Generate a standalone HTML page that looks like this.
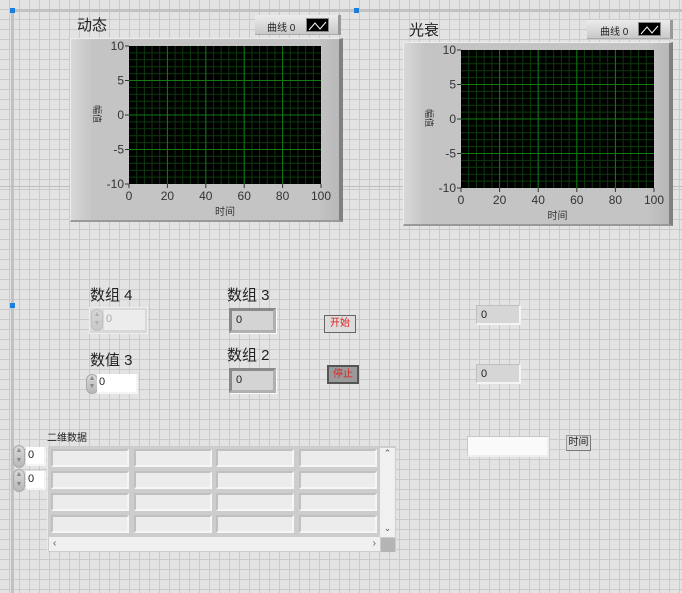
<!DOCTYPE html>
<html><head><meta charset="utf-8">
<style>
*{margin:0;padding:0;box-sizing:border-box}
body{width:682px;height:593px;overflow:hidden;position:relative;font-family:"Liberation Sans","Noto Sans CJK SC",sans-serif;color:#222;
background-color:#e3e3e3;
background-image:linear-gradient(to right,#cacaca 1px,transparent 1px),linear-gradient(to bottom,#cacaca 1px,transparent 1px);
background-size:10px 10px;background-position:9px 9px;}
.a{position:absolute}
.lbl{position:absolute;font-size:15px;line-height:17px;color:#222;white-space:nowrap}
.ind{position:absolute;background:#d4d4d4;border:3px solid;border-color:#8a8a8a #b0b0b0 #b0b0b0 #8a8a8a;box-shadow:1px 1px 0 #fafafa;font-size:11px;padding:3px 0 0 4px}
.btn{position:absolute;font-size:10px;color:#e02020;text-align:center;line-height:15px;border:1px solid #555}
.spin{position:absolute;width:12px;background:linear-gradient(#d8d8d8,#b8b8b8);border-radius:6px;border:1px solid #aaa;font-size:7px;color:#888;text-align:center;line-height:9px}
.num{position:absolute;background:#fff;font-size:11px;padding:2px 0 0 2px;border-right:2px solid #f4f4f4;border-bottom:2px solid #f4f4f4}
.cell{position:absolute;width:78px;height:18px;background:#ececec;border:2px solid;border-color:#c0c0c0 #f6f6f6 #f6f6f6 #c0c0c0}
.frame{position:absolute;background:linear-gradient(to right,#d8d8d8,#c4c4c4 8%,#c4c4c4 92%,#b8b8b8);border-right:4px solid #808080;border-bottom:2px solid #9a9a9a;border-left:1px solid #ececec;border-top:1px solid #ececec}
</style></head><body>
<div class="a" style="left:11px;top:9px;width:3px;height:584px;background:#c2c2c2"></div>
<div class="a" style="left:11px;top:9px;width:671px;height:3px;background:#c2c2c2"></div>
<div class="a" style="left:0;top:186px;width:682px;height:1px;background:#bdbdbd"></div>
<div class="a" style="left:10px;top:8px;width:5px;height:5px;background:#1a7ee0"></div>
<div class="a" style="left:354px;top:8px;width:5px;height:5px;background:#1a7ee0"></div>
<div class="a" style="left:10px;top:303px;width:5px;height:5px;background:#1a7ee0"></div>

<div class="lbl" style="left:77px;top:17px;font-size:15px">动态</div>
<div class="a" style="left:255px;top:15px;width:86px;height:20px;background:linear-gradient(#ececec,#c8c8c8);border-right:3px solid #999;border-bottom:1px solid #aaa"></div>
<div class="a" style="left:267px;top:19px;font-size:10px">曲线 0</div>
<div class="a" style="left:306px;top:18px;width:23px;height:14px;background:#000;border:1px solid #888"><svg width="21" height="12"><path d="M2 10 L8 3 L13 9 L19 2" stroke="#fff" fill="none" stroke-width="1"/></svg></div>
<div class="frame" style="left:70px;top:38px;width:273px;height:184px"></div>
<svg class="a" style="left:70px;top:38px" width="273" height="184" id="g1"></svg>

<div class="lbl" style="left:409px;top:22px;font-size:15px">光衰</div>
<div class="a" style="left:587px;top:20px;width:86px;height:19px;background:linear-gradient(#ececec,#c8c8c8);border-right:3px solid #999;border-bottom:1px solid #aaa"></div>
<div class="a" style="left:600px;top:23px;font-size:10px">曲线 0</div>
<div class="a" style="left:638px;top:22px;width:23px;height:14px;background:#000;border:1px solid #888"><svg width="21" height="12"><path d="M2 10 L8 3 L13 9 L19 2" stroke="#fff" fill="none" stroke-width="1"/></svg></div>
<div class="frame" style="left:403px;top:42px;width:270px;height:184px"></div>
<svg class="a" style="left:403px;top:42px" width="270" height="184" id="g2"></svg>

<div class="lbl" style="left:90px;top:287px">数组 4</div>
<div class="a" style="left:89px;top:307px;width:59px;height:27px;background:#d8d8d8;border:1px solid #eee"></div>
<div class="spin" style="left:91px;top:309px;height:22px;opacity:.5">▲<br>▼</div>
<div class="a" style="left:104px;top:310px;width:41px;height:20px;background:#ececec;color:#aaa;font-size:11px;padding:3px 0 0 2px">0</div>

<div class="lbl" style="left:227px;top:287px">数组 3</div>
<div class="ind" style="left:229px;top:308px;width:47px;height:25px">0</div>
<div class="btn" style="left:324px;top:315px;width:32px;height:18px;background:#dcdcdc;border-color:#666">开始</div>

<div class="lbl" style="left:90px;top:352px">数值 3</div>
<div class="spin" style="left:86px;top:374px;height:20px;line-height:8px">▲<br>▼</div>
<div class="num" style="left:97px;top:374px;width:41px;height:20px">0</div>

<div class="lbl" style="left:227px;top:347px">数组 2</div>
<div class="ind" style="left:229px;top:368px;width:47px;height:25px">0</div>
<div class="btn" style="left:327px;top:365px;width:32px;height:19px;background:#9a9a9a;border:2px solid #555;line-height:15px">停止</div>

<div class="a" style="left:476px;top:305px;width:45px;height:20px;background:#d6d6d6;border-top:1px solid #c0c0c0;border-left:1px solid #c0c0c0;border-right:2px solid #f4f4f4;border-bottom:2px solid #f4f4f4;font-size:11px;padding:3px 0 0 4px">0</div>
<div class="a" style="left:476px;top:364px;width:45px;height:20px;background:#d6d6d6;border-top:1px solid #c0c0c0;border-left:1px solid #c0c0c0;border-right:2px solid #f4f4f4;border-bottom:2px solid #f4f4f4;font-size:11px;padding:3px 0 0 4px">0</div>

<div class="a" style="left:467px;top:436px;width:82px;height:21px;background:#fafafa;border-top:1px solid #c8c8c8;border-left:1px solid #c8c8c8;border-right:2px solid #eee;border-bottom:2px solid #eee"></div>
<div class="a" style="left:566px;top:435px;width:25px;height:16px;background:#d8d8d8;border:1px solid #999;border-right-color:#777;border-bottom-color:#777;font-size:10px;line-height:14px;text-align:center">时间</div>

<div class="a" style="left:47px;top:429px;font-size:10px">二维数据</div>
<div class="spin" style="left:13px;top:445px;height:23px;line-height:10px">▲<br>▼</div>
<div class="num" style="left:26px;top:447px;width:20px;height:19px">0</div>
<div class="spin" style="left:13px;top:469px;height:23px;line-height:10px">▲<br>▼</div>
<div class="num" style="left:26px;top:471px;width:20px;height:19px">0</div>
<div class="a" style="left:47px;top:446px;width:349px;height:106px;background:#cdcdcd;border-left:1px solid #e8e8e8"></div>
<div id="cells"></div>
<div class="a" style="left:380px;top:448px;width:15px;height:89px;background:#f0f0f0;font-size:9px;color:#555;text-align:center">⌃<div style="margin-top:64px">⌄</div></div>
<div class="a" style="left:49px;top:537px;width:331px;height:14px;background:#f0f0f0;font-size:10px;color:#555;padding-left:4px;line-height:14px">‹<span style="position:absolute;right:4px">›</span></div>
<div class="a" style="left:381px;top:538px;width:14px;height:14px;background:#b4b4b4"></div>

<script>
function graph(id,pl,pt,pw,ph){
 var s='',svg=document.getElementById(id);
 s+='<rect x="'+pl+'" y="'+pt+'" width="'+pw+'" height="'+ph+'" fill="#000"/>';
 for(var i=1;i<25;i++){var x=pl+pw*i/25;s+='<line x1="'+x+'" y1="'+pt+'" x2="'+x+'" y2="'+(pt+ph)+'" stroke="#0d3a0d" stroke-width="1"/>';}
 for(var i=1;i<20;i++){var y=pt+ph*i/20;s+='<line x1="'+pl+'" y1="'+y+'" x2="'+(pl+pw)+'" y2="'+y+'" stroke="#0d3a0d" stroke-width="1"/>';}
 for(var i=1;i<5;i++){var x=pl+pw*i/5;s+='<line x1="'+x+'" y1="'+pt+'" x2="'+x+'" y2="'+(pt+ph)+'" stroke="#117a11" stroke-width="1"/>';}
 for(var i=1;i<4;i++){var y=pt+ph*i/4;s+='<line x1="'+pl+'" y1="'+y+'" x2="'+(pl+pw)+'" y2="'+y+'" stroke="#117a11" stroke-width="1"/>';}
 var yl=['10','5','0','-5','-10'];
 for(var i=0;i<5;i++){var y=pt+ph*i/4;s+='<line x1="'+(pl-4)+'" y1="'+y+'" x2="'+pl+'" y2="'+y+'" stroke="#333"/><text x="'+(pl-5)+'" y="'+(y+4)+'" font-size="12" text-anchor="end" fill="#333" font-family="Liberation Sans">'+yl[i]+'</text>';}
 for(var i=0;i<6;i++){var x=pl+pw*i/5;s+='<line x1="'+x+'" y1="'+(pt+ph)+'" x2="'+x+'" y2="'+(pt+ph+4)+'" stroke="#333"/><text x="'+x+'" y="'+(pt+ph+16)+'" font-size="12" text-anchor="middle" fill="#333" font-family="Liberation Sans">'+(i*20)+'</text>';}
 s+='<text x="'+(pl+pw/2)+'" y="'+(pt+ph+31)+'" font-size="10" text-anchor="middle" fill="#333" font-family="Liberation Sans,Noto Sans CJK SC">时间</text>';
 s+='<text x="0" y="0" font-size="9" fill="#333" transform="translate('+(pl-35)+','+(pt+ph/2-10)+') rotate(90)" font-family="Liberation Sans,Noto Sans CJK SC">幅值</text>';
 svg.innerHTML=s;
}
graph('g1',59,8,192,138);
graph('g2',58,8,193,138);
var c='';
for(var r=0;r<4;r++)for(var k=0;k<4;k++){c+='<div class="cell" style="left:'+(51+k*82.5)+'px;top:'+(449+r*22)+'px"></div>';}
document.getElementById('cells').innerHTML=c;
</script>
</body></html>
